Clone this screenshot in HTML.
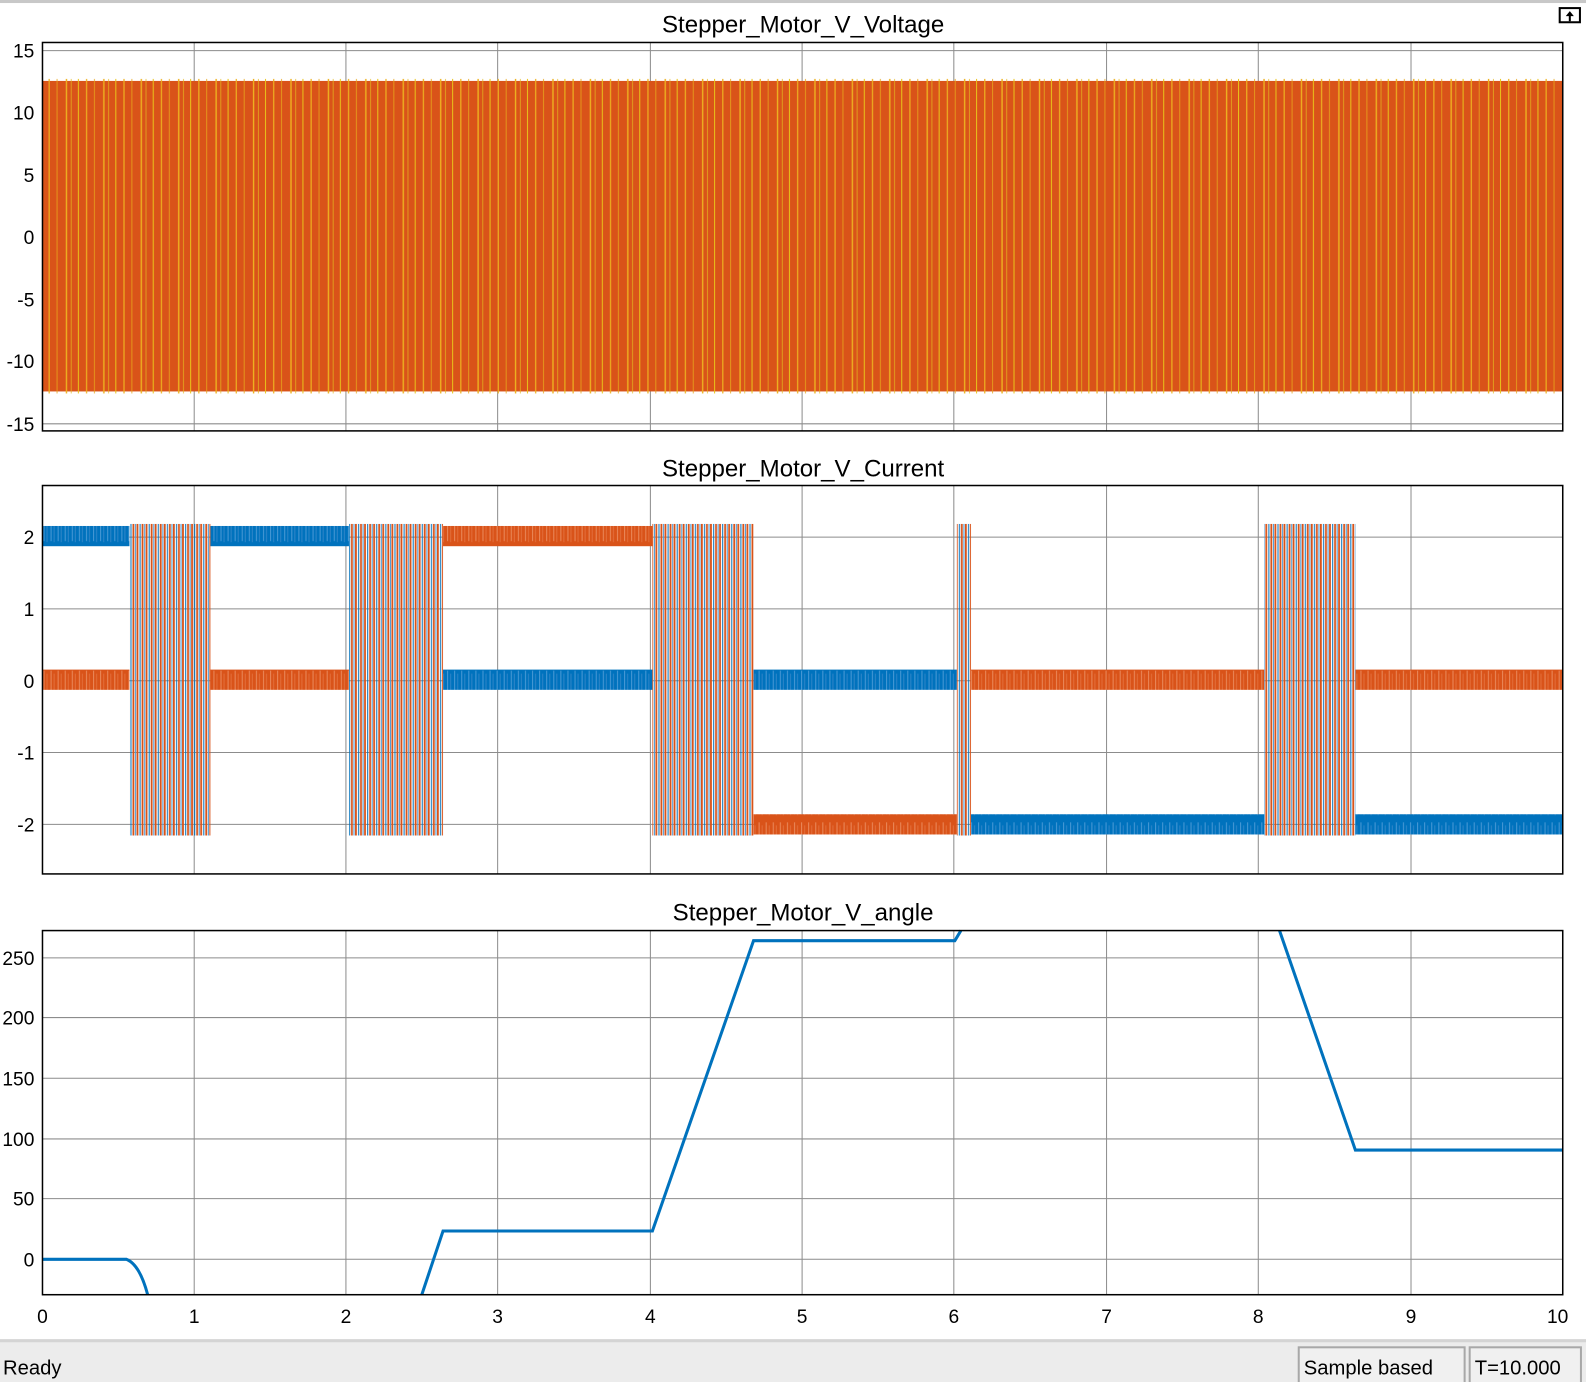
<!DOCTYPE html>
<html><head><style>
body{margin:0;width:1586px;height:1382px;overflow:hidden;background:#fff;font-family:"Liberation Sans",sans-serif;}
</style></head><body>
<svg width="1586" height="1382" viewBox="0 0 1568 1366.3" preserveAspectRatio="none" style="position:absolute;left:0;top:0" font-family="Liberation Sans, sans-serif">
<defs>
<pattern id="yl" width="37" height="10" patternUnits="userSpaceOnUse">
<rect x="3" width="1" height="10" fill="#e8c31a"/><rect x="11" width="1.2" height="10" fill="#edb120"/><rect x="19" width="0.8" height="10" fill="#e6a51c"/><rect x="28" width="1.4" height="10" fill="#edb120"/><rect x="33" width="0.7" height="10" fill="#e3b71f"/>
</pattern>
<pattern id="bn" width="7" height="30" patternUnits="userSpaceOnUse">
<rect width="7" height="30" fill="#0072bd"/><rect x="1" y="3" width="1" height="22" fill="#4a9ad6"/><rect x="4" y="6" width="1" height="20" fill="#2f85c8"/>
</pattern>
<pattern id="on" width="7" height="30" patternUnits="userSpaceOnUse">
<rect width="7" height="30" fill="#d95319"/><rect x="1" y="3" width="1" height="22" fill="#ea8a5c"/><rect x="4" y="6" width="1" height="20" fill="#e36e3a"/>
</pattern>
<pattern id="sw" width="9" height="10" patternUnits="userSpaceOnUse">
<rect x="0" width="1.8" height="10" fill="#d95319"/><rect x="3" width="1" height="10" fill="#0072bd"/><rect x="5" width="1.8" height="10" fill="#d95319"/><rect x="7.5" width="1" height="10" fill="#4a9ad6"/>
</pattern>
</defs>
<rect x="0" y="0" width="1568" height="3" fill="#c8c8c8"/>
<rect x="1542" y="8" width="20" height="14" fill="none" stroke="#000" stroke-width="2"/>
<path d="M1552 11 L1548 16 H1556 Z M1551 15 V21 H1553 V15Z" fill="#000"/>

<g font-size="23.8" text-anchor="middle" fill="#000">
<text x="794" y="32">Stepper_Motor_V_Voltage</text>
<text x="794" y="471">Stepper_Motor_V_Current</text>
<text x="794" y="910">Stepper_Motor_V_angle</text>
</g>

<g stroke="#8c8c8c" stroke-width="1">
<path d="M192 42V426M342 42V426M492 42V426M643 42V426M793 42V426M943 42V426M1094 42V426M1244 42V426M1395 42V426M42 50H1545M42 111H1545M42 173H1545M42 234H1545M42 296H1545M42 357H1545M42 419H1545"/>
<path d="M192 480V864M342 480V864M492 480V864M643 480V864M793 480V864M943 480V864M1094 480V864M1244 480V864M1395 480V864M42 531H1545M42 602H1545M42 673H1545M42 744H1545M42 815H1545"/>
<path d="M192 920V1280M342 920V1280M492 920V1280M643 920V1280M793 920V1280M943 920V1280M1094 920V1280M1244 920V1280M1395 920V1280M42 947H1545M42 1006H1545M42 1066H1545M42 1126H1545M42 1185H1545M42 1245H1545"/>
</g>

<rect x="42" y="80" width="1503" height="307" fill="#d95319"/>
<rect x="42" y="78" width="1503" height="311" fill="url(#yl)"/>

<g>
<rect x="42" y="520" width="86" height="20" fill="url(#bn)"/><rect x="42" y="662" width="86" height="20" fill="url(#on)"/>
<rect x="208" y="520" width="137" height="20" fill="url(#bn)"/><rect x="208" y="662" width="137" height="20" fill="url(#on)"/>
<rect x="438" y="520" width="207" height="20" fill="url(#on)"/><rect x="438" y="662" width="207" height="20" fill="url(#bn)"/>
<rect x="745" y="662" width="201" height="20" fill="url(#bn)"/><rect x="745" y="805" width="201" height="20" fill="url(#on)"/>
<rect x="960" y="805" width="290" height="20" fill="url(#bn)"/><rect x="960" y="662" width="290" height="20" fill="url(#on)"/>
<rect x="1340" y="805" width="205" height="20" fill="url(#bn)"/><rect x="1340" y="662" width="205" height="20" fill="url(#on)"/>
<rect x="128" y="518" width="80" height="308" fill="url(#sw)"/>
<rect x="345" y="518" width="93" height="308" fill="url(#sw)"/>
<rect x="645" y="518" width="100" height="308" fill="url(#sw)"/>
<rect x="946" y="518" width="14" height="308" fill="url(#sw)"/>
<rect x="1250" y="518" width="90" height="308" fill="url(#sw)"/>
</g>

<g fill="none" stroke="#0072bd" stroke-width="3">
<path d="M42 1245H125Q138 1250 146 1280"/>
<path d="M417 1280L438 1217H645L745 930H944L950 920"/>
<path d="M1265 920L1340 1137H1545"/>
</g>

<g fill="none" stroke="#000" stroke-width="1.5">
<rect x="42" y="42" width="1503" height="384"/>
<rect x="42" y="480" width="1503" height="384"/>
<rect x="42" y="920" width="1503" height="360"/>
</g>

<g font-size="19" text-anchor="end" fill="#000">
<text x="34" y="57">15</text><text x="34" y="118">10</text><text x="34" y="180">5</text><text x="34" y="241">0</text><text x="34" y="303">-5</text><text x="34" y="364">-10</text><text x="34" y="426">-15</text>
<text x="34" y="538">2</text><text x="34" y="609">1</text><text x="34" y="680">0</text><text x="34" y="751">-1</text><text x="34" y="822">-2</text>
<text x="34" y="954">250</text><text x="34" y="1013">200</text><text x="34" y="1073">150</text><text x="34" y="1133">100</text><text x="34" y="1192">50</text><text x="34" y="1252">0</text>
</g>
<g font-size="19" text-anchor="middle" fill="#000">
<text x="42" y="1308">0</text><text x="192" y="1308">1</text><text x="342" y="1308">2</text><text x="492" y="1308">3</text><text x="643" y="1308">4</text><text x="793" y="1308">5</text><text x="943" y="1308">6</text><text x="1094" y="1308">7</text><text x="1244" y="1308">8</text><text x="1395" y="1308">9</text><text x="1540" y="1308">10</text>
</g>

<rect x="0" y="1324" width="1568" height="43" fill="#ececec"/>
<rect x="0" y="1324" width="1568" height="3" fill="#d4d4d4"/>
<rect x="1284" y="1332" width="164" height="40" fill="#f0f0f0" stroke="#a8a8a8" stroke-width="2"/>
<rect x="1453" y="1332" width="110" height="40" fill="#f0f0f0" stroke="#a8a8a8" stroke-width="2"/>
<g font-size="20" fill="#000">
<text x="3" y="1359">Ready</text>
<text x="1289" y="1359">Sample based</text>
<text x="1458" y="1359">T=10.000</text>
</g>
</svg>
</body></html>
